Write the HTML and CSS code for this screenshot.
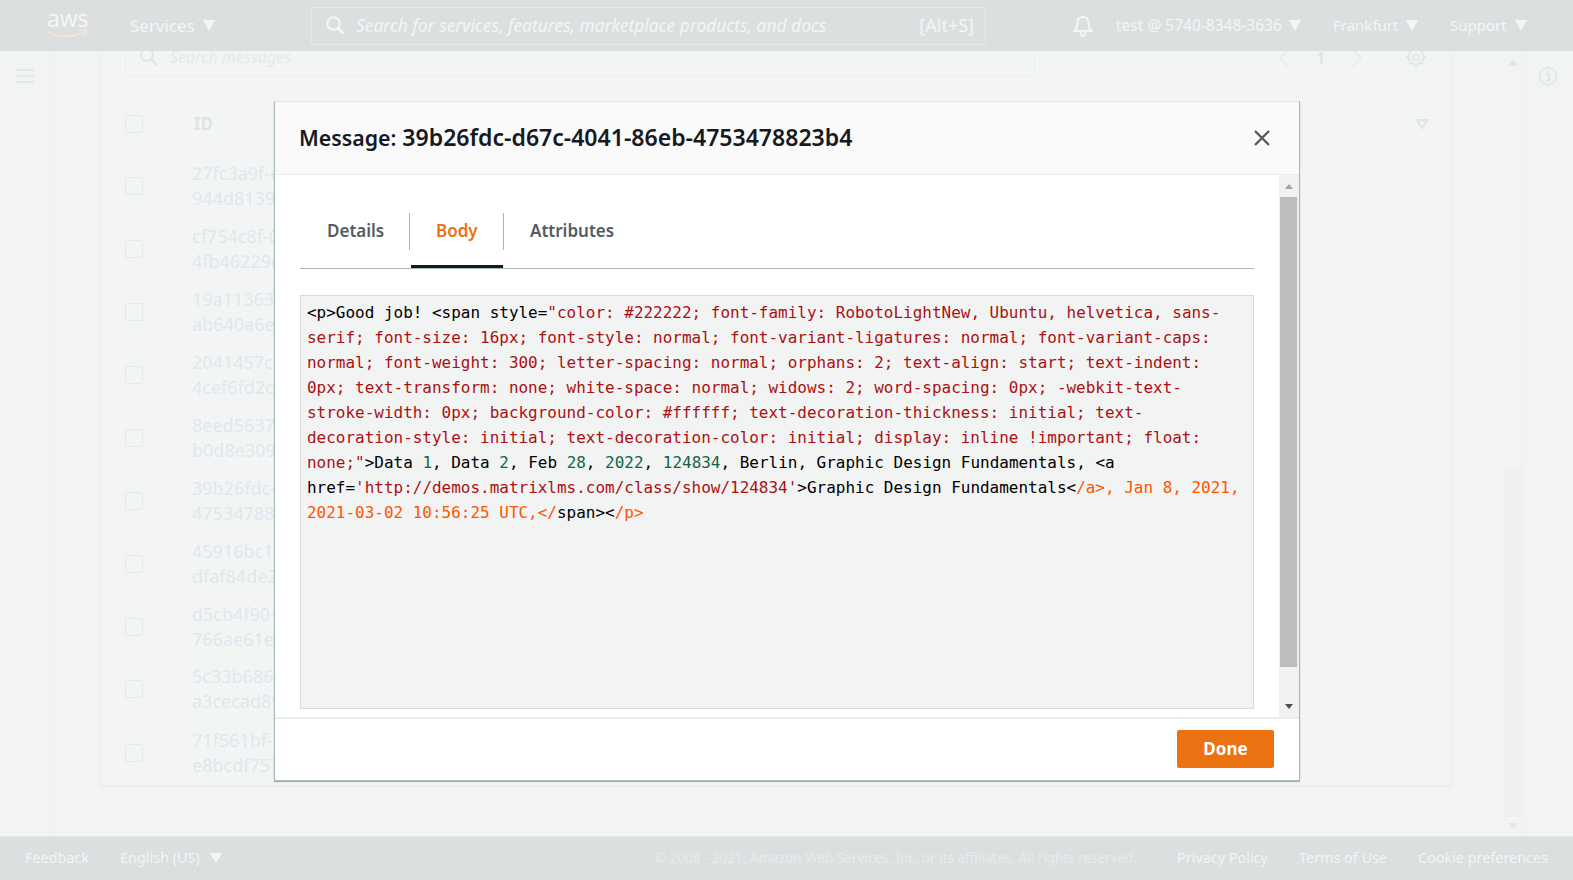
FILE: index.html
```html
<!DOCTYPE html>
<html lang="en">
<head>
<meta charset="utf-8">
<title>Message</title>
<link rel="stylesheet" href="styles.css">
</head>
<body>
<header class="topbar">
  <div class="logo">
    <span class="logo-text">aws</span>
    <svg class="logo-smile" width="42" height="10" viewBox="0 0 42 10"><path d="M1 2 C11 8.5 27 9 38 3" fill="none" stroke="#f5e6d3" stroke-width="1.6"/><path d="M33 1.5 L41 1 L38 7" fill="none" stroke="#f5e6d3" stroke-width="1.6"/></svg>
  </div>
  <div class="menu services">Services<span class="caret"></span></div>
  <div class="global-search">
    <svg class="icon-search" width="20" height="20" viewBox="0 0 20 20"><circle cx="8.5" cy="8.5" r="6.2" fill="none" stroke="#f4f5f5" stroke-width="2.2"/><path d="M13 13 L18.5 18.5" stroke="#f4f5f5" stroke-width="2.6"/></svg>
    <span class="global-placeholder">Search for services, features, marketplace products, and docs</span>
    <span class="shortcut">[Alt+S]</span>
  </div>
  <svg class="bell" width="20" height="22" viewBox="0 0 20 22"><path d="M10 2 C6 2 4.5 5 4.5 8 C4.5 12 3.5 14 1.5 16 H18.500 C16.500 14 15.500 12 15.500 8 C15.500 5 14 2 10 2 Z" fill="none" stroke="#f4f5f5" stroke-width="2"/><circle cx="10" cy="18.500" r="2.500" fill="none" stroke="#f4f5f5" stroke-width="1.800"/></svg>
  <div class="menu account">test @ 5740-8348-3636<span class="caret"></span></div>
  <div class="menu region">Frankfurt<span class="caret"></span></div>
  <div class="menu support">Support<span class="caret"></span></div>
</header>

<main class="workspace">
  <aside class="rail-left">
    <svg class="hamburger" width="18" height="14" viewBox="0 0 18 14"><path d="M0 1 H18 M0 7 H18 M0 13 H18" stroke="#e4e7e7" stroke-width="2"/></svg>
  </aside>
  <section class="content">
    <div class="panel">
      <div class="toolbar">
        <div class="msg-search">
          <svg class="icon-msg-search" width="20" height="20" viewBox="0 0 20 20"><circle cx="8" cy="8" r="6" fill="none" stroke="#e3e6e6" stroke-width="2.200"/><path d="M12.500 12.500 L18 18" stroke="#e3e6e6" stroke-width="2.800"/></svg>
          <span class="msg-placeholder">Search messages</span>
        </div>
        <div class="pager">
          <svg width="12" height="20" viewBox="0 0 12 20"><path d="M10 2 L2 10 L10 18" fill="none" stroke="#e9ecec" stroke-width="2"/></svg>
          <span class="page-num">1</span>
          <svg width="12" height="20" viewBox="0 0 12 20"><path d="M2 2 L10 10 L2 18" fill="none" stroke="#e9ecec" stroke-width="2"/></svg>
        </div>
        <svg class="gear" width="22" height="22" viewBox="0 0 22 22"><circle cx="11" cy="11" r="3" fill="none" stroke="#e4e7e7" stroke-width="2"/><circle cx="11" cy="11" r="7.500" fill="none" stroke="#e4e7e7" stroke-width="2"/><path d="M11 1 V4 M11 18 V21 M1 11 H4 M18 11 H21 M4 4 L6 6 M16 16 L18 18 M18 4 L16 6 M6 16 L4 18" stroke="#e4e7e7" stroke-width="2.600"/></svg>
      </div>
      <div class="table-head">
        <span class="checkbox"></span>
        <span class="col-sep"></span>
        <span class="th-id">ID</span>
        <svg class="sort" width="14" height="12" viewBox="0 0 14 12"><path d="M2 2 H12 L7 10 Z" fill="none" stroke="#e2e5e5" stroke-width="2"/></svg>
      </div>
      <div class="row"><span class="checkbox"></span><div class="cell">27fc3a9f-e<br>944d8139</div></div>
      <div class="row"><span class="checkbox"></span><div class="cell">cf754c8f-0<br>4fb46229d</div></div>
      <div class="row"><span class="checkbox"></span><div class="cell">19a11363<br>ab640a6e</div></div>
      <div class="row"><span class="checkbox"></span><div class="cell">2041457c<br>4cef6fd2c</div></div>
      <div class="row"><span class="checkbox"></span><div class="cell">8eed5637<br>b0d8e309</div></div>
      <div class="row"><span class="checkbox"></span><div class="cell">39b26fdc-d<br>47534788</div></div>
      <div class="row"><span class="checkbox"></span><div class="cell">45916bc1<br>dfaf84de2</div></div>
      <div class="row"><span class="checkbox"></span><div class="cell">d5cb4f90-<br>766ae61e</div></div>
      <div class="row"><span class="checkbox"></span><div class="cell">5c33b686<br>a3cecad89</div></div>
      <div class="row"><span class="checkbox"></span><div class="cell">71f561bf-<br>e8bcdf757</div></div>
    </div>
  </section>
  <div class="page-scroll">
    <span class="arrow-up-faint"></span>
    <span class="page-thumb"></span>
    <span class="arrow-down-faint"></span>
  </div>
  <aside class="rail-right">
    <svg class="info" width="20" height="20" viewBox="0 0 20 20"><circle cx="10" cy="10" r="8.500" fill="none" stroke="#e4e7e7" stroke-width="2"/><circle cx="10" cy="6" r="1.500" fill="#e4e7e7"/><path d="M8 9 H11 V14 M8 14.500 H13" fill="none" stroke="#e4e7e7" stroke-width="2"/></svg>
  </aside>
</main>

<footer class="bottombar">
  <span class="foot-link feedback">Feedback</span>
  <span class="foot-link lang">English (US)<span class="caret caret-small"></span></span>
  <span class="copyright">© 2008 - 2021, Amazon Web Services, Inc. or its affiliates. All rights reserved.</span>
  <span class="foot-link">Privacy Policy</span>
  <span class="foot-link">Terms of Use</span>
  <span class="foot-link">Cookie preferences</span>
</footer>

<div class="modal">
  <div class="modal-head">
    <h1 class="modal-title"><span class="title-label">Message:</span> 39b26fdc-d67c-4041-86eb-4753478823b4</h1>
    <svg class="close" width="18" height="18" viewBox="0 0 18 18"><path d="M2 2 L16 16 M16 2 L2 16" stroke="#545b64" stroke-width="2.400"/></svg>
  </div>
  <div class="modal-body">
    <div class="modal-content">
      <div class="tabs">
        <div class="tab tab-details">Details</div>
        <div class="tab tab-body">Body</div>
        <div class="tab tab-attrs">Attributes</div>
      </div>
      <div class="code">
        <div class="ln">&lt;p&gt;Good job! &lt;span style=<span class="s">"color: #222222; font-family: RobotoLightNew, Ubuntu, helvetica, sans-</span></div>
        <div class="ln s">serif; font-size: 16px; font-style: normal; font-variant-ligatures: normal; font-variant-caps:</div>
        <div class="ln s">normal; font-weight: 300; letter-spacing: normal; orphans: 2; text-align: start; text-indent:</div>
        <div class="ln s">0px; text-transform: none; white-space: normal; widows: 2; word-spacing: 0px; -webkit-text-</div>
        <div class="ln s">stroke-width: 0px; background-color: #ffffff; text-decoration-thickness: initial; text-</div>
        <div class="ln s">decoration-style: initial; text-decoration-color: initial; display: inline !important; float:</div>
        <div class="ln"><span class="s">none;"</span>&gt;Data <span class="n">1</span>, Data <span class="n">2</span>, Feb <span class="n">28</span>, <span class="n">2022</span>, <span class="n">124834</span>, Berlin, Graphic Design Fundamentals, &lt;a</div>
        <div class="ln">href=<span class="s">'http://demos.matrixlms.com/class/show/124834'</span>&gt;Graphic Design Fundamentals&lt;<span class="o">/a&gt;, Jan 8, 2021,</span></div>
        <div class="ln"><span class="o">2021-03-02 10:56:25 UTC,&lt;/</span>span&gt;&lt;<span class="o">/p&gt;</span></div>
      </div>
    </div>
    <div class="modal-scroll">
      <span class="arrow-up"></span>
      <span class="thumb"></span>
      <span class="arrow-down"></span>
    </div>
  </div>
  <div class="modal-foot">
    <button class="done">Done</button>
  </div>
</div>
</body>
</html>
```
FILE: styles.css
```css
* { box-sizing: border-box; }
html, body { margin: 0; height: 100%; }
body {
  width: 1573px;
  height: 880px;
  overflow: hidden;
  display: flex;
  flex-direction: column;
  position: relative;
  background: #f2f4f3;
  font-family: "Noto Sans", "Open Sans", sans-serif;
}
.topbar {
  height: 51px;
  flex: none;
  background: #dcdfe0;
  display: flex;
  align-items: center;
  color: #f4f5f5;
  font-size: 16px;
  padding-left: 46px;
  position: relative;
  z-index: 1;
}
.logo { width: 84px; height: 51px; position: relative; }
.logo-text {
  position: absolute;
  left: 1px;
  top: 5px;
  font-family: "Open Sans", sans-serif;
  font-size: 23px;
  line-height: 26px;
  color: #f6f7f7;
}
.logo-smile { position: absolute; left: 0; top: 29px; }
.menu { display: flex; align-items: center; white-space: nowrap; padding-bottom: 1px; }
.services { width: 181px; font-size: 17px; }
.caret {
  width: 0;
  height: 0;
  margin-left: 8px;
  border-left: 6.500px solid transparent;
  border-right: 6.500px solid transparent;
  border-top: 11px solid #f4f5f5;
}
.caret-small { margin-left: 10px; border-left-width: 6px; border-right-width: 6px; border-top-width: 10px; }
.global-search {
  width: 675px;
  height: 38px;
  border: 1px solid #e6e8e9;
  border-radius: 2px;
  display: flex;
  align-items: center;
  padding: 0 11px 1px 13px;
}
.icon-search { flex: none; margin-right: 11px; }
.global-placeholder { flex: 1; font-style: italic; font-size: 17.400px; white-space: nowrap; }
.shortcut { font-size: 18px; }
.bell { margin-left: 87px; margin-right: 23px; flex: none; }
.account { width: 217px; font-size: 15.500px; }
.account .caret { margin-left: 7px; }
.region { width: 117px; font-size: 15px; }
.support { font-size: 15px; }

.workspace { flex: 1; display: flex; min-height: 0; }
.rail-left { width: 51px; flex: none; border-right: 1px solid #edefee; position: relative; }
.hamburger { display: block; margin: 18px 0 0 16px; }
.content { flex: 1; padding-left: 49px; padding-right: 52px; }
.panel {
  background: #f3f5f4;
  border-left: 1px solid #edefef;
  border-right: 1px solid #edefef;
  border-bottom: 2px solid #ebeded;
  height: 736px;
}
.toolbar { height: 44px; display: flex; align-items: flex-start; padding-left: 24px; border-bottom: 1px solid #f0f2f1; position: relative; }
.msg-search {
  width: 910px;
  height: 25px;
  border: 1px solid #ecefef;
  border-top: 0;
  border-radius: 0 0 2px 2px;
  display: flex;
  align-items: center;
  padding: 0 0 12px 13px;
}
.icon-msg-search { flex: none; margin-right: 11px; }
.msg-placeholder { font-style: italic; font-size: 16px; color: #e6e9e9; white-space: nowrap; }
.pager { display: flex; align-items: center; margin-left: 243px; height: 14px; gap: 26px; margin-top: 0; padding-top: 0; }
.page-num { font-size: 16px; color: #dfe2e2; font-weight: 600; }
.gear { margin-left: 42px; margin-top: -5px; }
.table-head { height: 60px; display: flex; align-items: center; padding: 0 0 2px 24px; border-bottom: 1px solid #f0f2f1; position: relative; }
.checkbox { width: 18px; height: 18px; flex: none; border: 1px solid #e6e9e9; border-radius: 2px; }
.col-sep { width: 1px; height: 36px; background: #f0f2f1; margin-left: 24px; }
.th-id { margin-left: 26px; font-weight: 700; font-size: 17px; color: #e0e3e3; }
.sort { margin-left: auto; margin-right: 22px; }
.row { height: 62.950px; display: flex; align-items: center; padding-left: 24px; border-bottom: 1px solid #f0f2f1; }
.row:last-child { border-bottom: 0; }
.cell { margin-left: 49px; font-size: 18px; line-height: 25px; color: #dfe7ef; white-space: nowrap; }

.page-scroll { width: 19px; flex: none; border-right: 1px solid #edefee; display: flex; flex-direction: column; align-items: center; position: relative; }
.arrow-up-faint { width: 0; height: 0; margin-top: 9px; border: 5px solid transparent; border-top: 0; border-bottom: 6px solid #e3e6e6; }
.page-thumb { width: 18px; flex: 1; margin-top: 403px; background: #eef0f0; margin-right: 1px; }
.arrow-down-faint { width: 0; height: 0; margin: 6px 0 7px; border: 5px solid transparent; border-bottom: 0; border-top: 6px solid #e6e8e8; }
.rail-right { width: 50px; flex: none; position: relative; }
.info { display: block; margin: 15px 0 0 15px; }

.bottombar {
  height: 44px;
  flex: none;
  background: #dcdfe0;
  border-top: 1px solid #e2e4e5;
  display: flex;
  align-items: center;
  padding: 0 25px 2px;
  color: #f3f4f4;
  font-size: 14.400px;
  gap: 31px;
}
.foot-link { display: flex; align-items: center; white-space: nowrap; }
.copyright { margin-left: auto; font-size: 13.500px; color: #e8eaeb; white-space: nowrap; margin-right: 9px; }

.modal {
  position: absolute;
  left: 274px;
  top: 101px;
  width: 1026px;
  height: 680px;
  background: #fff;
  border: 1px solid #aab7b8;
  border-top-color: #e4e7e7;
  display: flex;
  flex-direction: column;
  box-shadow: 0 1px 1px rgba(0, 28, 36, .3);
}
.modal-head {
  height: 73px;
  flex: none;
  background: #fafafa;
  border-bottom: 1px solid #eaeded;
  display: flex;
  align-items: center;
  justify-content: space-between;
  padding: 0 28px 1px 24px;
}
.modal-title { margin: 0; font-size: 23.050px; line-height: 30px; font-weight: 600; color: #16191f; white-space: nowrap; }
.title-label { font-size: 21.300px; }
.close { flex: none; }
.modal-body { flex: 1; display: flex; min-height: 0; }
.modal-content { flex: 1; padding: 0 25px; }
.tabs { height: 94px; display: flex; align-items: flex-end; border-bottom: 1px solid #aab7b8; margin-bottom: 26px; }
.tab {
  height: 55px;
  display: flex;
  align-items: center;
  padding-bottom: 20px;
  font-size: 17px;
  font-weight: 600;
  color: #545b64;
  position: relative;
}
.tab-details { width: 110px; padding-left: 27px; }
.tab-details::after, .tab-body::after {
  content: "";
  position: absolute;
  right: 0;
  top: 0;
  width: 1px;
  height: 37px;
  background: #aab7b8;
}
.tab-body {
  width: 94px;
  padding-left: 26px;
  color: #ec7211;
}
.tab-body::before {
  content: "";
  position: absolute;
  left: 1px;
  right: 1px;
  bottom: 0;
  height: 3px;
  background: #16191f;
}
.tab-attrs { padding-left: 26px; }
.code {
  height: 414px;
  background: #f2f3f3;
  border: 1px solid #d5dbdb;
  padding: 4px 6px;
  font-family: "DejaVu Sans Mono", monospace;
  font-size: 15.970px;
  line-height: 25px;
  color: #000;
}
.ln { white-space: pre; }
.s { color: #a11; }
.n { color: #164; }
.o { color: #f50; }
.modal-scroll {
  width: 20px;
  flex: none;
  background: #f1f1f1;
  display: flex;
  flex-direction: column;
  align-items: center;
}
.arrow-up { width: 0; height: 0; margin-top: 9px; border: 4.500px solid transparent; border-top: 0; border-bottom: 5px solid #a3a3a3; }
.thumb { width: 17px; height: 470px; margin: 8px 2px 0 0; background: #bdbdbd; }
.arrow-down { width: 0; height: 0; margin-top: 37px; border: 4.500px solid transparent; border-bottom: 0; border-top: 5px solid #505050; }
.modal-foot {
  height: 63px;
  flex: none;
  border-top: 2px solid #eaeded;
  display: flex;
  justify-content: flex-end;
  align-items: center;
  padding: 0 25px 1px 0;
}
.done {
  width: 97px;
  height: 38px;
  padding: 0 0 2px;
  background: #ec7211;
  color: #fff;
  border: 0;
  border-radius: 2px;
  font-family: inherit;
  font-size: 17px;
  font-weight: 700;
}
```
